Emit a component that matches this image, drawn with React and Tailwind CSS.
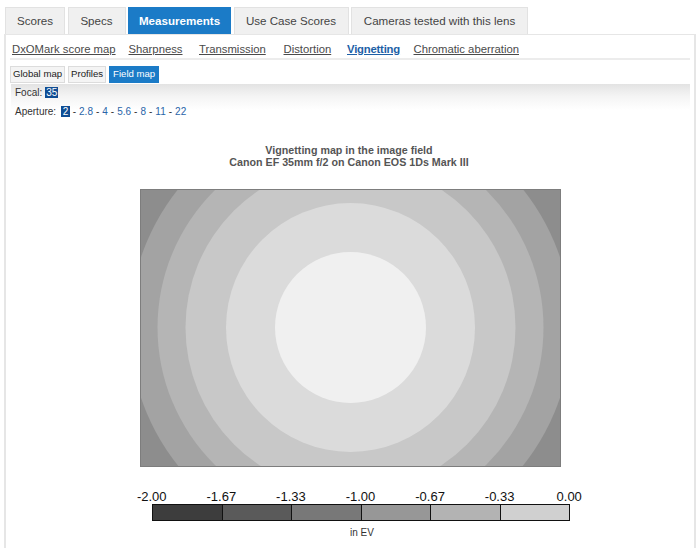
import React from "react";

const tabs = [
  { label: "Scores", w: "w-[60px]" },
  { label: "Specs", w: "w-[58px]" },
  { label: "Measurements", w: "w-[103px]", active: true },
  { label: "Use Case Scores", w: "w-[115px]" },
  { label: "Cameras tested with this lens", w: "w-[177px]" },
];

const subnav = [
  { label: "DxOMark score map", w: "w-[103px]" },
  { label: "Sharpness", w: "w-[57px]" },
  { label: "Transmission", w: "w-[71px]" },
  { label: "Distortion", w: "w-[50px]" },
  { label: "Vignetting", w: "w-[53px]", active: true },
  { label: "Chromatic aberration", w: "w-[107px]" },
];

const apertures = ["2.8", "4", "5.6", "8", "11", "22"];

const legendLabels = ["-2.00", "-1.67", "-1.33", "-1.00", "-0.67", "-0.33", "0.00"];
const legendColors = ["bg-[#3d3d3d]", "bg-[#5a5a5a]", "bg-[#787878]", "bg-[#979797]", "bg-[#b3b3b3]", "bg-[#d0d0d0]"];

function VignetteMap() {
  const cx = 209.5;
  const cy = 137.5;
  return (
    <svg width="419" height="276" viewBox="0 0 419 276" className="block">
      <rect x="0" y="0" width="419" height="276" fill="#8d8d8d" />
      <circle cx={cx} cy={cy} r="221" fill="#a3a3a3" />
      <circle cx={cx} cy={cy} r="193" fill="#b5b5b5" />
      <circle cx={cx} cy={cy} r="165" fill="#c8c8c8" />
      <circle cx={cx} cy={cy} r="124.5" fill="#dbdbdb" />
      <circle cx={cx} cy={cy} r="75.5" fill="#f0f0f0" />
    </svg>
  );
}

export default function App() {
  return (
    <div className="w-[700px] h-[548px] overflow-hidden bg-white font-['Liberation_Sans',Arial,sans-serif] text-[#444]">
      {/* Tabs */}
      <div className="flex gap-[2.5px] pt-[7px] pl-[5px]">
        {tabs.map((t) =>
          t.active ? (
            <div
              key={t.label}
              className={`${t.w} h-[27px] flex items-center justify-center bg-[#1b7bc7] border border-[#1b7bc7] text-white font-bold text-[11.6px]`}
            >
              {t.label}
            </div>
          ) : (
            <div
              key={t.label}
              className={`${t.w} h-[27px] flex items-center justify-center bg-[#f0f0f0] border border-b-0 border-[#e2e2e2] text-[#444] text-[11.6px]`}
            >
              {t.label}
            </div>
          )
        )}
      </div>

      {/* Panel */}
      <div className="ml-[4px] w-[692px] h-[520px] border-2 border-t border-b-0 border-[#e6e6e6]">
        {/* Sub nav */}
        <div className="flex gap-[13.5px] pl-[6px] pt-[7px] text-[11.3px] leading-[14px] whitespace-nowrap">
          {subnav.map((s) =>
            s.active ? (
              <span key={s.label} className={`${s.w} underline font-bold text-[#1d5fa6] tracking-[-0.2px]`}>
                {s.label}
              </span>
            ) : (
              <span key={s.label} className={`${s.w} underline text-[#4a4a4a]`}>
                {s.label}
              </span>
            )
          )}
        </div>
        <div className="mx-[4px] mt-[2px] h-[2px] bg-[#ececec]" />

        {/* Buttons */}
        <div className="flex gap-[3px] ml-[4px] mt-[6px] text-[9.6px]">
          <div className="h-[17px] px-[2px] flex items-center bg-[#f4f4f4] border border-[#dcdcdc] text-[#222]">Global map</div>
          <div className="h-[17px] px-[2px] flex items-center bg-[#f4f4f4] border border-[#dcdcdc] text-[#222]">Profiles</div>
          <div className="h-[17px] px-[3px] flex items-center bg-[#1b7bc7] border border-[#1b7bc7] text-white">Field map</div>
        </div>

        {/* Focal / aperture */}
        <div className="ml-[5px] mr-[4px] mt-px pt-[3px] bg-[linear-gradient(to_bottom,#e3e3e3_0px,#f4f4f4_12px,#ffffff_26px)] text-[10px] text-[#333]">
          <div className="flex items-center h-[11px] pl-[4px]">
            <span>Focal:</span>
            <span className="ml-[3px] px-px bg-[#0f4d94] text-white leading-[11px]">35</span>
          </div>
          <div className="flex items-center h-[11px] pl-[4px] mt-[8px]">
            <span>Aperture:</span>
            <span className="ml-[5px] px-[1.5px] bg-[#0f4d94] text-white leading-[11px]">2</span>
            {apertures.map((a) => (
              <React.Fragment key={a}>
                <span className="mx-[3px] text-[#333]">-</span>
                <span className="text-[#2a65a8]">{a}</span>
              </React.Fragment>
            ))}
          </div>
        </div>

        {/* Title */}
        <div className="mt-[27px] text-center font-bold text-[10.7px] leading-[12px] text-[#555] -ml-[2px]">
          <div>Vignetting map in the image field</div>
          <div>Canon EF 35mm f/2 on Canon EOS 1Ds Mark III</div>
        </div>

        {/* Map */}
        <div className="mt-[21px] ml-[134px] w-[421px] border border-[#7d7d7d]">
          <VignetteMap />
        </div>

        {/* Legend */}
        <div className="ml-[111px] mt-[22px] w-[487px] grid grid-cols-7 text-center text-[13px] leading-[15px] text-[#111]">
          {legendLabels.map((l) => (
            <span key={l}>{l}</span>
          ))}
        </div>
        <div className="ml-[146px] w-[418px] h-[17px] grid grid-cols-6 border border-[#111] bg-[#111] gap-px">
          {legendColors.map((c, i) => (
            <div key={i} className={c} />
          ))}
        </div>
        <div className="mt-[6px] ml-[296px] w-[120px] text-center text-[10px] leading-[12px] text-[#333]">in EV</div>
      </div>
    </div>
  );
}
